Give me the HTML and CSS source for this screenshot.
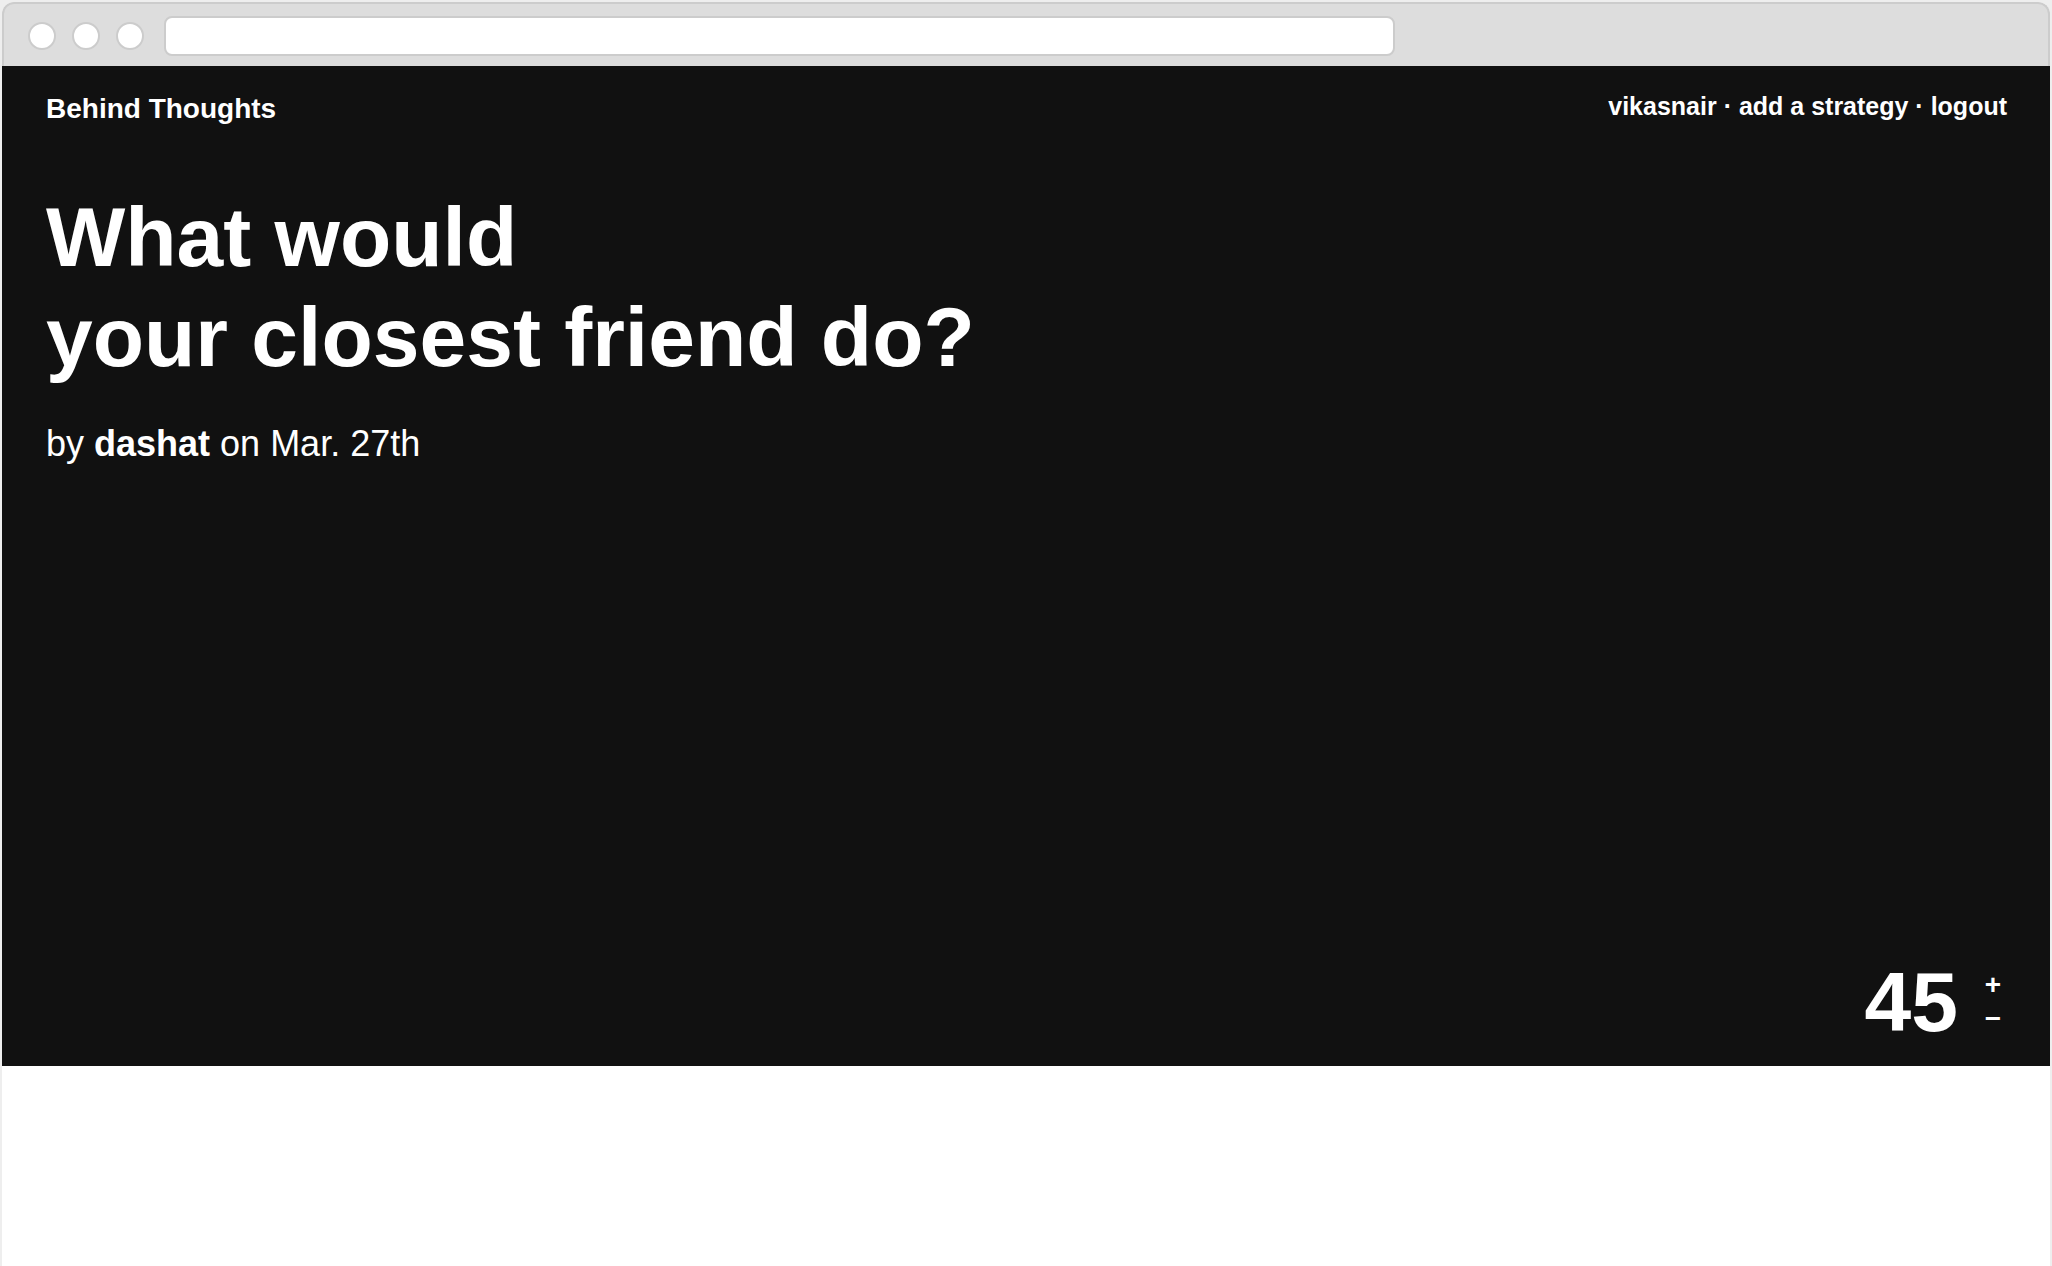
FILE: index.html
```html
<!DOCTYPE html>
<html lang="en">
<head>
<meta charset="utf-8">
<title>Behind Thoughts</title>
<link rel="stylesheet" href="styles.css">
</head>
<body>
<div class="browser">
  <div class="toolbar">
    <span class="dot"></span>
    <span class="dot"></span>
    <span class="dot"></span>
    <input class="address" type="text" aria-label="Address">
  </div>
  <main class="hero">
    <header class="top">
      <a class="brand" href="#">Behind Thoughts</a>
      <nav class="nav"><a href="#">vikasnair</a> · <a href="#">add a strategy</a> · <a href="#">logout</a></nav>
    </header>
    <h1 class="title">What would<br>your closest friend do?</h1>
    <p class="byline">by <a class="author" href="#">dashat</a> on Mar. 27th</p>
    <div class="votes">
      <span class="count">45</span>
      <div class="vote-buttons">
        <button class="vote" type="button" aria-label="Vote up">+</button>
        <button class="vote" type="button" aria-label="Vote down">−</button>
      </div>
    </div>
  </main>
</div>
</body>
</html>
```

FILE: styles.css
```css
* {
  box-sizing: border-box;
}

body {
  margin: 0;
  background: #eee;
  font-family: "Liberation Sans", Arial, sans-serif;
}

a {
  color: inherit;
  text-decoration: none;
}

.browser {
  min-height: calc(100vh - 2px);
  margin: 2px 2px 0;
  border-radius: 12px 12px 0 0;
  background: #fff;
}

.toolbar {
  display: flex;
  align-items: center;
  gap: 16px;
  height: 64px;
  padding: 2px 24px 0;
  border: 2px solid #ccc;
  border-bottom: 0;
  border-radius: 12px 12px 0 0;
  background: #ddd;
}

.dot {
  flex: none;
  width: 28px;
  height: 28px;
  border: 2px solid #ccc;
  border-radius: 50%;
  background: #fff;
}

.address {
  width: 60vw;
  min-width: 0;
  height: 40px;
  margin-left: 4px;
  padding: 0 12px;
  border: 2px solid #ccc;
  border-radius: 8px;
  background: #fff;
  font-size: 20px;
}

.hero {
  display: flex;
  flex-direction: column;
  min-height: 1000px;
  padding: 24px 43px 22px 44px;
  background: #111;
  color: #fff;
}

.top {
  display: flex;
  justify-content: space-between;
  align-items: flex-start;
  font-weight: bold;
}

.brand {
  padding-top: 3px;
  font-size: 28px;
  line-height: 32px;
}

.nav {
  font-size: 25px;
  line-height: 32px;
}

.title {
  margin: 62px 0 0;
  font-size: 84px;
  line-height: 100px;
}

.byline {
  margin: 35px 0 0;
  font-size: 36px;
  line-height: 44px;
}

.author {
  font-weight: bold;
}

.votes {
  display: flex;
  align-items: center;
  gap: 21px;
  margin-top: auto;
  margin-left: auto;
  font-weight: bold;
}

.count {
  font-size: 84px;
  line-height: 84px;
}

.vote-buttons {
  display: flex;
  flex-direction: column;
}

.vote {
  width: 28px;
  height: 34px;
  padding: 0;
  border: 0;
  background: none;
  color: inherit;
  font: bold 28px/34px "Liberation Sans", Arial, sans-serif;
}
```
